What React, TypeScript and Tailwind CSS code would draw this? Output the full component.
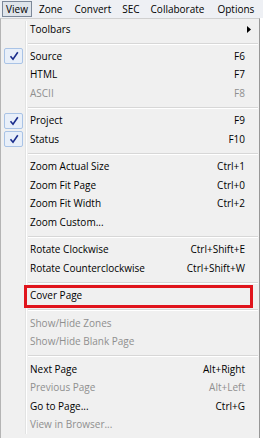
import React from "react";

type Item =
    | { kind: "sep"; h: string }
    | {
          kind: "item";
          label: string;
          shortcut?: string;
          checked?: boolean;
          disabled?: boolean;
          submenu?: boolean;
          marked?: boolean;
      };

const items: Item[] = [
    { kind: "item", label: "Toolbars", submenu: true },
    { kind: "sep", h: "h-[8px]" },
    { kind: "item", label: "Source", shortcut: "F6", checked: true },
    { kind: "item", label: "HTML", shortcut: "F7" },
    { kind: "item", label: "ASCII", shortcut: "F8", disabled: true },
    { kind: "sep", h: "h-[9px]" },
    { kind: "item", label: "Project", shortcut: "F9", checked: true },
    { kind: "item", label: "Status", shortcut: "F10", checked: true },
    { kind: "sep", h: "h-[9px]" },
    { kind: "item", label: "Zoom Actual Size", shortcut: "Ctrl+1" },
    { kind: "item", label: "Zoom Fit Page", shortcut: "Ctrl+0" },
    { kind: "item", label: "Zoom Fit Width", shortcut: "Ctrl+2" },
    { kind: "item", label: "Zoom Custom..." },
    { kind: "sep", h: "h-[9px]" },
    { kind: "item", label: "Rotate Clockwise", shortcut: "Ctrl+Shift+E" },
    { kind: "item", label: "Rotate Counterclockwise", shortcut: "Ctrl+Shift+W" },
    { kind: "sep", h: "h-[9px]" },
    { kind: "item", label: "Cover Page", marked: true },
    { kind: "sep", h: "h-[9px]" },
    { kind: "item", label: "Show/Hide Zones", disabled: true },
    { kind: "item", label: "Show/Hide Blank Page", disabled: true },
    { kind: "sep", h: "h-[9px]" },
    { kind: "item", label: "Next Page", shortcut: "Alt+Right" },
    { kind: "item", label: "Previous Page", shortcut: "Alt+Left", disabled: true },
    { kind: "item", label: "Go to Page...", shortcut: "Ctrl+G" },
    { kind: "item", label: "View in Browser...", disabled: true },
];

function Check() {
    return (
        <div className="w-[19px] h-[16px] rounded-[2px] border border-[#a9c3e6] bg-[#e8eff9] flex items-center justify-center">
            <svg width="10" height="10" viewBox="0 0 10 10">
                <path
                    d="M1.5 5.2 L4 8.2 L8.8 1.2"
                    fill="none"
                    stroke="#1a2c8c"
                    strokeWidth="1.6"
                />
            </svg>
        </div>
    );
}

function Gutter({ children }: { children?: React.ReactNode }) {
    return (
        <div className="w-[25px] self-stretch flex items-center justify-center shrink-0 border-r border-r-[#e2e3e3] shadow-[1px_0_0_#ffffff] pl-[1px]">
            {children}
        </div>
    );
}

export default function App() {
    return (
        <div
            className="w-[263px] h-[438px] bg-white overflow-hidden text-[10px] text-black"
            style={{ fontFamily: '"Open Sans", "Noto Sans", sans-serif' }}
        >
            <div className="h-[18px] flex items-center bg-[#eef0f4] pl-[2px] whitespace-nowrap">
                <div className="h-[16px] w-[30px] justify-center flex items-center border border-[#7c8899] bg-[#dfe4ea]">
                    View
                </div>
                <div className="ml-[7px]">Zone</div>
                <div className="ml-[12px]">Convert</div>
                <div className="ml-[11px]">SEC</div>
                <div className="ml-[11px]">Collaborate</div>
                <div className="ml-[13px]">Options</div>
            </div>
            <div className="w-[260px] h-[420px] bg-[#f0f0f0] border-l border-l-[#b4b4b4] border-r border-r-[#979797] border-t border-t-[#d0d0d0] pt-[1.5px] flex flex-col">
                {items.map((it, i) =>
                    it.kind === "sep" ? (
                        <div key={i} className={"flex " + it.h}>
                            <Gutter />
                            <div className="flex-1 flex items-center pl-[2px] pr-[1px]">
                                <div className="w-full h-[1px] bg-[#d7d7d7] shadow-[0_1px_0_#ffffff]" />
                            </div>
                        </div>
                    ) : (
                        <div key={i} className="relative flex h-[18.5px]">
                            <Gutter>{it.checked && <Check />}</Gutter>
                            <div
                                className={
                                    "flex-1 flex items-center pl-[4px] pr-[14px] " +
                                    (it.disabled ? "text-[#8f8f8f]" : "text-black")
                                }
                            >
                                <span className="flex-1">{it.label}</span>
                                {it.shortcut && <span>{it.shortcut}</span>}
                                {it.submenu && (
                                    <svg width="4" height="7" viewBox="0 0 4 7" className="-mr-[6px]">
                                        <path d="M0 0 L4 3.5 L0 7 Z" fill="#000" />
                                    </svg>
                                )}
                            </div>
                            {it.marked && (
                                <div className="absolute left-[23px] right-[6px] -top-[2px] -bottom-[3px] border-[3px] border-[#e0141c]" />
                            )}
                        </div>
                    )
                )}
            </div>
        </div>
    );
}
